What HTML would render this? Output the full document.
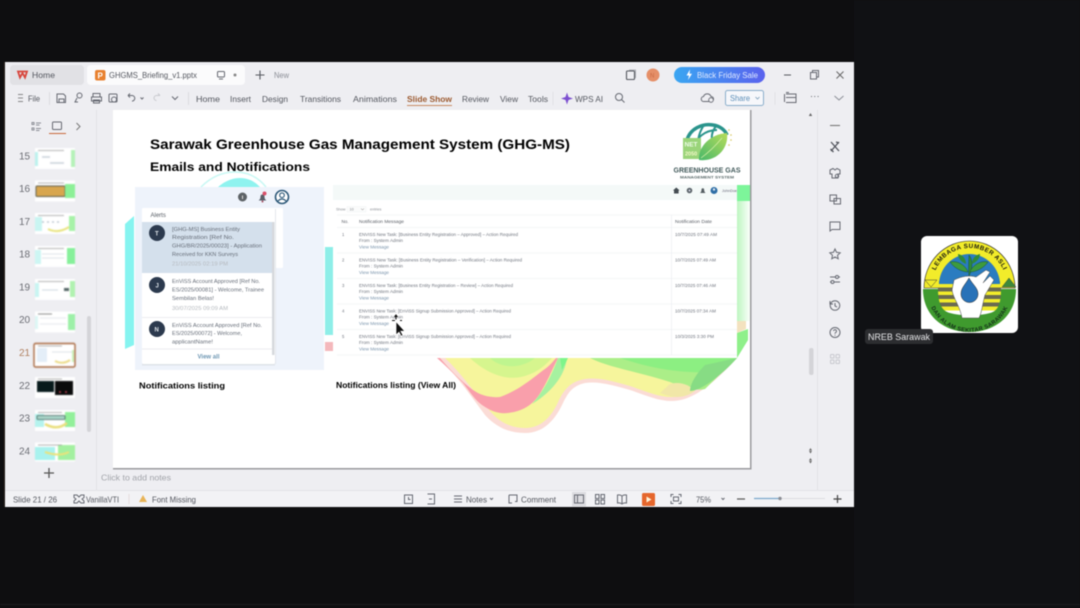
<!DOCTYPE html>
<html lang="en"><head><meta charset="utf-8"><title>GHGMS Briefing</title>
<style>
html,body{margin:0;padding:0;width:1080px;height:608px;overflow:hidden;background:#0e0e10}
svg{display:block;filter:blur(.5px)}
text{font-family:"Liberation Sans",sans-serif}
.ui{font-size:8.500px;fill:#54575f}
.ic{fill:none;stroke:#666972;stroke-width:1}
.n{font-size:10px;fill:#6b6d74}
.t{font-size:4.200px;fill:#70757f}
.l{font-size:4.200px;fill:#7a94ac}
.c{font-size:5.600px;fill:#676e79}
.d{font-size:5.200px;fill:#b6babf}
.b{font-weight:bold;fill:#000}
</style></head><body>
<svg width="1080" height="608" viewBox="0 0 1080 608" xmlns="http://www.w3.org/2000/svg">
<defs>
<linearGradient id="bf" x1="0" x2="1" y1="0" y2="0"><stop offset="0" stop-color="#3aa6f2"/><stop offset="1" stop-color="#5a62ee"/></linearGradient>
<linearGradient id="gh" x1="0" x2="1" y1="0" y2="0"><stop offset="0" stop-color="#bdf6c0"/><stop offset="1" stop-color="#fbfffb"/></linearGradient>
<linearGradient id="lf" x1="0" x2="1" y1="1" y2="0"><stop offset="0" stop-color="#49b86a"/><stop offset="1" stop-color="#b6dc5a"/></linearGradient>
<path id="arcT" d="M932.500 285A37 37 0 0 1 1006.500 285"/>
<path id="arcB" d="M927.500 290A42 42 0 0 0 1011.500 290"/>
</defs>
<rect width="1080" height="608" fill="#0e0e10"/>
<rect x="854" y="0" width="226" height="608" fill="#101114"/>
<rect x="0" y="604" width="1080" height="1" fill="#1c1c1e"/>

<!-- window -->
<rect x="5" y="62" width="849" height="445" fill="#eeeef2"/>
<rect x="3.500" y="62" width="1.500" height="445" fill="#1d1815"/>

<!-- tabs -->
<rect x="10" y="65" width="74" height="20" rx="4" fill="#e1e1e5"/>
<rect x="87" y="65" width="158" height="20" rx="4" fill="#fbfbfc"/>
<path d="M18 71.500l2 6 2.500-4.500 2.500 4.500 2-6z" fill="none" stroke="#d8453c" stroke-width="1.800"/>
<text x="32" y="78" class="ui" textLength="23" lengthAdjust="spacingAndGlyphs">Home</text>
<rect x="95" y="70" width="10.500" height="10.500" rx="2" fill="#e8812f"/>
<text x="97.500" y="78.500" style="font-size:8px;font-weight:bold;fill:#fff">P</text>
<text x="109" y="78" class="ui" textLength="88" lengthAdjust="spacingAndGlyphs">GHGMS_Briefing_v1.pptx</text>
<rect x="217.500" y="71.500" width="7" height="5.500" rx="1" class="ic"/><path d="M219 79h4" class="ic"/>
<circle cx="235" cy="75" r="1.500" fill="#888"/>
<path d="M260 70.500v9M255.500 75h9" stroke="#55585f" stroke-width="1.100"/>
<text x="274" y="78" style="font-size:8px;fill:#8b8e96" textLength="15" lengthAdjust="spacingAndGlyphs">New</text>

<!-- top right -->
<rect x="626.500" y="71" width="8" height="8.500" rx="1" fill="none" stroke="#55585f" stroke-width="1.100"/><path d="M629 70h6.500v8" fill="none" stroke="#9a9da4" stroke-width=".8"/>
<circle cx="653" cy="75" r="6.500" fill="#e58f68"/>
<text x="650" y="77.500" style="font-size:6px;fill:#c96a44">N</text>
<rect x="674" y="67" width="91" height="16" rx="8" fill="url(#bf)"/>
<path d="M690 69.500l-3.500 6h2.500l-1 4.500 4-6.300h-2.500z" fill="#fff"/>
<text x="697" y="78" style="font-size:8px;fill:#dfe9ff" textLength="61" lengthAdjust="spacingAndGlyphs">Black Friday Sale</text>
<path d="M784 75h7" stroke="#55585f"/>
<rect x="810.500" y="72.500" width="6" height="6.500" class="ic"/><path d="M812.500 72.500v-2h6v6.500h-2" class="ic"/>
<path d="M836.500 71.500l7 7M843.500 71.500l-7 7" stroke="#666"/>

<!-- toolbar -->
<path d="M18 94.500h5M18 98h5M18 101.500h5" stroke="#888" stroke-width=".9"/>
<text x="28" y="101.500" class="ui" textLength="12" lengthAdjust="spacingAndGlyphs">File</text>
<path d="M49.500 92v13" stroke="#dcdce0"/>
<path d="M57 94h6.500l2 2v6.500h-8.500z" class="ic"/><path d="M59 102v-3h5v3" class="ic"/>
<circle cx="79.500" cy="95.500" r="2.500" class="ic"/><path d="M77 98l-2 4h3" class="ic"/>
<path d="M93 97v-3.500h7V97M91.500 97h10v4h-10zM93.500 100h6v3h-6z" class="ic"/>
<rect x="109" y="94" width="8" height="8" rx="1" class="ic"/><circle cx="114" cy="99.500" r="2.500" class="ic"/>
<path d="M128 95.500h4a2.800 2.800 0 0 1 0 5.600M128 95.500l2-2M128 95.500l2 2" class="ic"/>
<path d="M140.500 97.500l1.500 1.500 1.500-1.500" class="ic"/>
<path d="M160 95.500h-3.500a2.500 2.500 0 0 0 0 5M160 95.500l-2-2" fill="none" stroke="#c8c9ce"/>
<path d="M172 96.500l3 3 3-3" class="ic"/>
<path d="M188.500 92v13" stroke="#dcdce0"/>
<g class="ui">
<text x="196" y="102" textLength="24" lengthAdjust="spacingAndGlyphs">Home</text>
<text x="230" y="102" textLength="21" lengthAdjust="spacingAndGlyphs">Insert</text>
<text x="262" y="102" textLength="26" lengthAdjust="spacingAndGlyphs">Design</text>
<text x="300" y="102" textLength="41" lengthAdjust="spacingAndGlyphs">Transitions</text>
<text x="353" y="102" textLength="44" lengthAdjust="spacingAndGlyphs">Animations</text>
<text x="407" y="102" textLength="45" lengthAdjust="spacingAndGlyphs" style="font-weight:bold;fill:#9c5a30">Slide Show</text>
<text x="462" y="102" textLength="27" lengthAdjust="spacingAndGlyphs">Review</text>
<text x="500" y="102" textLength="18" lengthAdjust="spacingAndGlyphs">View</text>
<text x="528" y="102" textLength="20" lengthAdjust="spacingAndGlyphs">Tools</text>
<text x="575" y="102" textLength="28" lengthAdjust="spacingAndGlyphs">WPS AI</text>
</g>
<rect x="407" y="105" width="45" height="1" fill="#c98a64"/>
<path d="M553 92v13" stroke="#e0e0e4"/>
<path d="M567 92.500l1.500 4.500 4.500 1.500-4.500 1.500-1.500 4.500-1.500-4.500-4.500-1.500 4.500-1.500z" fill="#7c4fd0"/>
<circle cx="619" cy="97" r="3.500" class="ic"/><path d="M621.500 99.500l3 3" class="ic"/>
<path d="M704 101.500h7a2.500 2.500 0 0 0 0-5 4 4 0 0 0-7.500 0 2.500 2.500 0 0 0 .5 5z" class="ic"/>
<circle cx="711" cy="100" r="2.300" fill="#eeeef2" stroke="#5a5d66" stroke-width=".8"/>
<rect x="725.500" y="90.500" width="38" height="15" rx="2" fill="#f6f7fb" stroke="#8aaecb"/>
<text x="730" y="101" style="font-size:8px;fill:#5d8fb8" textLength="20" lengthAdjust="spacingAndGlyphs">Share</text>
<path d="M755.500 97l2 2 2-2" fill="none" stroke="#7a9cb8" stroke-width=".8"/>
<path d="M775 92v13" stroke="#e2e2e6"/>
<path d="M786 94h10v8.500h-10M786 92.500h3M786 97.500h10M784.500 94v8" class="ic"/>
<text x="810" y="99" style="font-size:9px;fill:#55585f;letter-spacing:.3px">···</text>
<path d="M834.500 96l4.500 4 4.500-4" fill="none" stroke="#8a8d95"/>

<!-- left pane -->
<path d="M96.500 110v381M817.500 110v381" stroke="#e2e2e6"/>
<path d="M32 122.500h2v2h-2zM32 128h2v2h-2zM36 123h5M36 125h3.500M36 128.500h5M36 130.500h3.500" fill="none" stroke="#8a8d95"/>
<rect x="52.500" y="122" width="9" height="7.500" rx="1" class="ic"/>
<rect x="49" y="133" width="17" height="1" fill="#c9683a"/>
<path d="M76.500 123l3.500 3.500-3.500 3.500" fill="none" stroke="#777"/>
<rect x="87" y="316" width="4" height="116" rx="2" fill="#d4d4d8"/>
<path d="M49 468v10M44 473h10" stroke="#555" stroke-width="1.300"/>

<!-- thumbnails -->
<g class="n">
<text x="19" y="159.500">15</text><text x="19" y="192">16</text><text x="19" y="225">17</text><text x="19" y="257.500">18</text><text x="19" y="290.500">19</text><text x="19" y="323">20</text><text x="19" y="356" style="fill:#b08060">21</text><text x="19" y="389">22</text><text x="19" y="421.500">23</text><text x="19" y="454.500">24</text>
</g>
<g id="thumbs" style="filter:blur(.6px)">
<g><rect x="35" y="148" width="40" height="21" fill="#fff"/><rect x="35" y="152" width="3" height="14" fill="#bdf2ee"/><rect x="71" y="150" width="4" height="17" fill="#b5f2b8"/><path d="M38 150.500h26" stroke="#999" stroke-width=".8"/><path d="M42 157h8M50 163h14" stroke="#c9d0da" stroke-width="1.500"/></g>
<g><rect x="35" y="180.500" width="40" height="21" fill="#fff"/><rect x="36" y="186" width="29" height="10.500" rx="1" fill="#d8a64e" stroke="#5b5b4b"/><rect x="65" y="184" width="10" height="14" fill="#8cf097"/><path d="M38 183h26" stroke="#999" stroke-width=".8"/></g>
<g><rect x="35" y="213" width="40" height="21" fill="#fff"/><rect x="35" y="217" width="7" height="14" fill="#c9f5f2"/><rect x="69" y="216" width="6" height="15" fill="#a7f2a8"/><path d="M38 215.500h26" stroke="#999" stroke-width=".8"/><path d="M42 222h20" stroke="#b0bcc8" stroke-width="1.200" stroke-dasharray="2 3"/><path d="M48 229q10 5 21-2" stroke="#e9e47e" stroke-width="2" fill="none"/></g>
<g><rect x="35" y="246" width="40" height="21" fill="#fff"/><rect x="35" y="250" width="6" height="14" fill="#cdf6f3"/><rect x="67" y="248" width="8" height="16" fill="#86f09a"/><path d="M38 248.500h26" stroke="#999" stroke-width=".8"/><path d="M42 254h22M42 258h22" stroke="#dfe3e8"/></g>
<g><rect x="35" y="279" width="40" height="21" fill="#fff"/><rect x="35" y="283" width="4" height="14" fill="#c9f5f2"/><rect x="70" y="281" width="5" height="16" fill="#b0f2b0"/><rect x="64" y="288" width="5" height="3" fill="#566"/><path d="M38 281.500h26" stroke="#999" stroke-width=".8"/><path d="M42 290h16" stroke="#cfd8e0"/></g>
<g><rect x="35" y="311.500" width="40" height="21" fill="#fff"/><rect x="35" y="316" width="3" height="13" fill="#dcf7f5"/><rect x="68" y="314" width="7" height="16" fill="#9df0a8"/><path d="M38 314h14" stroke="#888"/><path d="M40 318h26M40 324h26" stroke="#e6e9ec"/></g>
<g><rect x="34" y="343.500" width="41" height="23.500" rx="1.500" fill="#fff" stroke="#a8683f" stroke-width="1.400"/><rect x="37" y="348" width="10" height="14" fill="#e4eef8"/><rect x="72" y="350" width="2" height="12" fill="#c8f2b8"/><path d="M38 346h24" stroke="#999" stroke-width=".8"/><path d="M52 352h20" stroke="#dde2e8"/><path d="M55 361q8 4 15-1" stroke="#ecdc8a" stroke-width="2" fill="none"/></g>
<g><rect x="35" y="377" width="40" height="21" fill="#fff"/><rect x="37" y="381" width="17" height="11" fill="#071a1c"/><rect x="55" y="381" width="18" height="14" fill="#0a0b0c"/><circle cx="60" cy="392" r="1" fill="#c04050"/><circle cx="66" cy="392" r="1" fill="#c04050"/><path d="M38 379h24" stroke="#999" stroke-width=".8"/></g>
<g><rect x="35" y="410" width="40" height="21" fill="#fff"/><rect x="35" y="414" width="9" height="13" fill="#b5f3ee"/><rect x="65" y="412" width="10" height="15" fill="#92f09a"/><rect x="37" y="415.500" width="28" height="4" rx="1" fill="#a8d4c8" stroke="#44635c" stroke-width=".8"/><path d="M45 424q12 7 22-1" stroke="#eadf7e" stroke-width="2.500" fill="none"/><path d="M38 412.500h24" stroke="#999" stroke-width=".8"/></g>
<g><rect x="35" y="442.500" width="40" height="19" fill="#fff"/><rect x="35" y="447" width="20" height="13" fill="#a9f2ee"/><rect x="58" y="445" width="17" height="15" fill="#a3f0a0"/><path d="M45 452q14 5 24 0" stroke="#ece27a" stroke-width="2" fill="none"/><path d="M38 445h24" stroke="#999" stroke-width=".8"/></g>
</g>

<!-- slide -->
<rect x="113" y="110" width="638.500" height="359.500" fill="#9b9b9e"/>
<rect x="113" y="110" width="637" height="358" fill="#fff"/>

<!-- decorative shapes -->
<path d="M125 224L134 216V345L125 349z" fill="#86f4f0"/>
<path d="M201 187C212 176 224 172 235 172C247 172 258 177 266 187" fill="none" stroke="#c8f8f4" stroke-width="1.500"/>
<path d="M218 187C226 180 234 178 240 178C248 178 254 181 260 187Z" fill="#8ff3ef"/>
<rect x="325" y="247" width="8" height="88" fill="#8eeee8"/>
<rect x="325" y="342" width="8" height="9" fill="#f4b8bc"/>
<rect x="737" y="185" width="13" height="16" fill="#7df59a"/>
<rect x="737" y="201" width="13" height="120" fill="url(#gh)"/>
<path d="M737 321h9v8l-9 4z" fill="#f3e2bf"/>
<path d="M737 333L748 329V340L737 358z" fill="#8ff08a"/>
<!-- wave -->
<path d="M437 358C455 372 470 395 485 415C497 428 510 433 525 433C545 433 556 418 563 403C568 393 572 386 585 383C600 381 615 386 630 390C645 395 658 401 672 401C690 401 710 388 737 358Z" fill="#fbdcd6"/>
<path d="M445 358C460 372 475 393 490 411C500 423 512 428 525 428C543 428 553 414 559 400C565 388 572 381 585 379C600 377 615 382 630 386C645 391 658 397 672 397C688 397 708 385 733 358Z" fill="#f6f59c"/>
<path d="M470 358C485 372 505 382 525 376C540 371 545 365 552 358Z" fill="#d6f58e"/>
<path d="M490 358C500 368 520 370 535 358Z" fill="#bff58f"/>
<path d="M437 358C445 365 455 375 463 383C470 392 475 400 482 405C492 412 500 414 508 413C525 411 535 403 542 390C548 380 553 368 558 358H556C552 363 549 366 545 369C535 376 520 390 500 397C490 398 480 395 473 390C462 382 450 370 440 358Z" fill="#f99fab"/>
<path d="M558 358H567C565 375 552 392 532 404C543 392 552 375 558 358Z" fill="#a6f1a0"/>
<path d="M560 358H568L562 370Z" fill="#7df58a"/>
<path d="M590 358C610 368 640 372 670 382C685 388 697 391 705 389L737 358Z" fill="#abee88"/>
<path d="M620 358C650 368 680 374 722 372L737 358Z" fill="#8cef82"/>
<path d="M660 393C675 399 685 398 695 391C690 385 680 381 670 384Z" fill="#f1e7a8"/>
<path d="M690 391C702 391 725 372 737 358L705 365C695 375 690 385 690 391Z" fill="#87dc84"/>

<!-- title -->
<text x="150" y="149" class="b" style="font-size:14px" textLength="420" lengthAdjust="spacingAndGlyphs">Sarawak Greenhouse Gas Management System (GHG-MS)</text>
<text x="150" y="171" class="b" style="font-size:12px" textLength="160" lengthAdjust="spacingAndGlyphs">Emails and Notifications</text>

<!-- GHG logo -->
<g fill="none" stroke="#2a948c">
<path d="M687 140C690 129 702 123 713 125C720 126 725 130 727 135" stroke-width="3.500"/>
<path d="M693 150C695 138 705 130 717 130M704 125C698 134 697 142 699 152M716 126C711 133 711 138 713 142" stroke-width="2"/>
</g>
<rect x="683" y="138" width="18" height="21" fill="#9ad47a"/>
<text x="684.500" y="146.500" style="font-size:6.500px;font-weight:bold;fill:#eefce8">NET</text>
<text x="685" y="155.500" style="font-size:5.500px;font-weight:bold;fill:#f3f8c8">2050</text>
<path d="M699 160C698 146 711 134 727 133C729 148 717 162 699 160Z" fill="url(#lf)"/>
<path d="M701 158Q712 150 722 138" stroke="#d8f0a8" stroke-width=".7" fill="none"/>
<circle cx="729" cy="130" r=".8" fill="#d6c65a"/><circle cx="731" cy="135" r=".8" fill="#d6c65a"/><circle cx="731" cy="140" r=".8" fill="#d6c65a"/><circle cx="729" cy="145" r=".8" fill="#d6c65a"/>
<text x="673.500" y="172.500" style="font-size:7px;font-weight:bold;fill:#41595a" textLength="67" lengthAdjust="spacingAndGlyphs">GREENHOUSE GAS</text>
<text x="680" y="178.500" style="font-size:3.800px;font-weight:bold;fill:#5a6a6a" textLength="54" lengthAdjust="spacingAndGlyphs">MANAGEMENT SYSTEM</text>

<!-- Alerts panel -->
<rect x="135" y="187" width="189" height="183" fill="#eef3fb"/>
<circle cx="242.500" cy="197" r="4.500" fill="#5d6266"/><rect x="242" y="195.500" width="1" height="3.500" fill="#ddd"/>
<path d="M258.500 200.500q2-1 2-4a2 2 0 0 1 4 0q0 3 2 4z" fill="#59606a"/><circle cx="264.500" cy="193.500" r="2" fill="#d9506a"/><circle cx="262.500" cy="201.500" r="1" fill="#a64e62"/>
<circle cx="282" cy="197" r="6.500" fill="#fff" stroke="#2c5878" stroke-width="1.600"/><circle cx="282" cy="195.200" r="2.300" fill="none" stroke="#2c5878" stroke-width="1.100"/><path d="M277.500 201.500q4.500-5 9 0" fill="none" stroke="#2c5878" stroke-width="1.200"/>
<rect x="142" y="208" width="141" height="60" rx="1" fill="#fff"/>
<rect x="142" y="208" width="133" height="156" rx="2" fill="#fff"/>
<rect x="275" y="209" width="1" height="155" fill="#e3e7ec"/>
<rect x="142" y="364" width="133" height="1.500" fill="#dfe3e8"/>
<text x="150.500" y="217" style="font-size:6px;fill:#555b63">Alerts</text>
<rect x="142" y="222" width="130" height="51" fill="#d4e0ec"/>
<rect x="272" y="222" width="2.500" height="133" fill="#d6d9dd"/>
<circle cx="157" cy="233" r="8" fill="#2c3a4e"/><text x="155" y="235.500" style="font-size:6px;font-weight:bold;fill:#dfe5ea">T</text>
<text x="172" y="231" class="c" textLength="68" lengthAdjust="spacingAndGlyphs">[GHG-MS] Business Entity</text>
<text x="172" y="239" class="c" textLength="62" lengthAdjust="spacingAndGlyphs">Registration [Ref No.</text>
<text x="172" y="247.500" class="c" textLength="90" lengthAdjust="spacingAndGlyphs">GHG/BR/2025/00023] - Application</text>
<text x="172" y="256" class="c" textLength="66" lengthAdjust="spacingAndGlyphs">Received for KKN Surveys</text>
<text x="172" y="265.500" class="d" textLength="56" lengthAdjust="spacingAndGlyphs">21/10/2025 02:19 PM</text>
<circle cx="157" cy="285" r="8" fill="#2c3a4e"/><text x="155.500" y="287.500" style="font-size:6px;font-weight:bold;fill:#dfe5ea">J</text>
<text x="172" y="283" class="c" textLength="88" lengthAdjust="spacingAndGlyphs">EnViSS Account Approved [Ref No.</text>
<text x="172" y="291.500" class="c" textLength="92" lengthAdjust="spacingAndGlyphs">ES/2025/00081] - Welcome, Trainee</text>
<text x="172" y="300" class="c" textLength="42" lengthAdjust="spacingAndGlyphs">Sembilan Belas!</text>
<text x="172" y="310" class="d" textLength="56" lengthAdjust="spacingAndGlyphs">30/07/2025 09:09 AM</text>
<path d="M142 317.500h130M142 349h130" stroke="#e6e8eb" stroke-width=".8"/>
<circle cx="157" cy="329" r="8" fill="#2c3a4e"/><text x="154.500" y="331.500" style="font-size:6px;font-weight:bold;fill:#dfe5ea">N</text>
<text x="172" y="327" class="c" textLength="90" lengthAdjust="spacingAndGlyphs">EnViSS Account Approved [Ref No.</text>
<text x="172" y="335" class="c" textLength="70" lengthAdjust="spacingAndGlyphs">ES/2025/00072] - Welcome,</text>
<text x="172" y="343.500" class="c" textLength="41" lengthAdjust="spacingAndGlyphs">applicantName!</text>
<text x="197.500" y="358.500" style="font-size:6.500px;font-weight:bold;fill:#6e97b3" textLength="22" lengthAdjust="spacingAndGlyphs">View all</text>
<text x="139" y="388.500" class="b" style="font-size:8px" textLength="86" lengthAdjust="spacingAndGlyphs">Notifications listing</text>

<!-- Notifications table -->
<rect x="333" y="185" width="404" height="173" fill="#fff"/>
<rect x="333" y="185" width="404" height="15" fill="#f4f9f8"/>
<path d="M673 190.500l3.300-3 3.300 3h-1v3h-4.600v-3z" fill="#444c52"/>
<circle cx="689.500" cy="190.500" r="2.800" fill="#5e666c"/><circle cx="689.500" cy="190.500" r=".9" fill="#eef"/>
<path d="M700 193q1.500-1 1.500-3.500a1.300 1.300 0 0 1 2.600 0q0 2.500 1.500 3.500z" fill="#555d62"/>
<circle cx="714" cy="190.500" r="3.500" fill="#2f6ea6"/><circle cx="714" cy="189.500" r="1.200" fill="#dfe9f2"/>
<text x="722" y="192" style="font-size:3.800px;fill:#667" textLength="15" lengthAdjust="spacingAndGlyphs">JohnDoe</text>
<text x="336" y="210.500" style="font-size:3.800px;fill:#888c92">Show</text>
<rect x="347" y="206.500" width="19" height="5.500" fill="#fafbfb" stroke="#eef0f2" stroke-width=".4"/>
<text x="349.500" y="210.500" style="font-size:3.800px;fill:#888c92">10</text>
<path d="M361 208.500l1.500 1.500 1.500-1.500" fill="none" stroke="#888" stroke-width=".5"/>
<text x="370" y="210.500" style="font-size:3.800px;fill:#888c92">entries</text>
<path d="M337 215h400M337 227.500h400M337 253h400M337 278.500h400M337 304h400M337 329.500h400M337 355h400" stroke="#f1f3f5" stroke-width=".7"/>
<path d="M671.500 215v140" stroke="#eceef1" stroke-width=".7"/>
<g style="font-weight:500">
<text x="341.500" y="223" style="font-size:4.500px;fill:#5c6168">No.</text>
<text x="359" y="223" style="font-size:4.500px;fill:#5c6168" textLength="45" lengthAdjust="spacingAndGlyphs">Notification Message</text>
<text x="675" y="223" style="font-size:4.500px;fill:#5c6168" textLength="37" lengthAdjust="spacingAndGlyphs">Notification Date</text>
</g>
<g>
<text x="342" y="236" class="t">1</text>
<text x="359" y="236" class="t" textLength="159" lengthAdjust="spacingAndGlyphs">ENVISS New Task: [Business Entity Registration – Approved] – Action Required</text>
<text x="359" y="242" class="t" textLength="44" lengthAdjust="spacingAndGlyphs">From : System Admin</text>
<text x="359" y="248.500" class="l" textLength="30" lengthAdjust="spacingAndGlyphs">View Message</text>
<text x="675" y="236" class="t" textLength="42" lengthAdjust="spacingAndGlyphs">10/7/2025 07:49 AM</text>

<text x="342" y="261.500" class="t">2</text>
<text x="359" y="261.500" class="t" textLength="163" lengthAdjust="spacingAndGlyphs">ENVISS New Task: [Business Entity Registration – Verification] – Action Required</text>
<text x="359" y="267.500" class="t" textLength="44" lengthAdjust="spacingAndGlyphs">From : System Admin</text>
<text x="359" y="274" class="l" textLength="30" lengthAdjust="spacingAndGlyphs">View Message</text>
<text x="675" y="261.500" class="t" textLength="41" lengthAdjust="spacingAndGlyphs">10/7/2025 07:49 AM</text>

<text x="342" y="287" class="t">3</text>
<text x="359" y="287" class="t" textLength="154" lengthAdjust="spacingAndGlyphs">ENVISS New Task: [Business Entity Registration – Review] – Action Required</text>
<text x="359" y="293" class="t" textLength="44" lengthAdjust="spacingAndGlyphs">From : System Admin</text>
<text x="359" y="299.500" class="l" textLength="30" lengthAdjust="spacingAndGlyphs">View Message</text>
<text x="675" y="287" class="t" textLength="41" lengthAdjust="spacingAndGlyphs">10/7/2025 07:46 AM</text>

<text x="342" y="312.500" class="t">4</text>
<text x="359" y="312.500" class="t" textLength="152" lengthAdjust="spacingAndGlyphs">ENVISS New Task: [EnViSS Signup Submission Approved] – Action Required</text>
<text x="359" y="318.500" class="t" textLength="44" lengthAdjust="spacingAndGlyphs">From : System Admin</text>
<text x="359" y="325" class="l" textLength="30" lengthAdjust="spacingAndGlyphs">View Message</text>
<text x="675" y="312.500" class="t" textLength="41" lengthAdjust="spacingAndGlyphs">10/7/2025 07:34 AM</text>

<text x="342" y="338" class="t">5</text>
<text x="359" y="338" class="t" textLength="152" lengthAdjust="spacingAndGlyphs">ENVISS New Task: [EnViSS Signup Submission Approved] – Action Required</text>
<text x="359" y="344" class="t" textLength="44" lengthAdjust="spacingAndGlyphs">From : System Admin</text>
<text x="359" y="350.500" class="l" textLength="30" lengthAdjust="spacingAndGlyphs">View Message</text>
<text x="675" y="338" class="t" textLength="39" lengthAdjust="spacingAndGlyphs">10/3/2025 3:30 PM</text>
</g>
<text x="336" y="388" class="b" style="font-size:8px" textLength="120" lengthAdjust="spacingAndGlyphs">Notifications listing (View All)</text>

<!-- cursor -->
<path d="M396 321.500v13.500l3-2.800 2.200 4 1.800-1-2.200-4h4z" fill="#111" stroke="#fff" stroke-width=".7"/>
<path d="M396 315.500v4M394.500 317l1.500-2 1.500 2M392 320.500h3M400 320.500h2" stroke="#111" stroke-width="1"/>

<!-- notes and side -->
<text x="101" y="480.500" style="font-size:8.500px;fill:#a2a4aa" textLength="70" lengthAdjust="spacingAndGlyphs">Click to add notes</text>
<path d="M810.500 113l-1.700 3h3.400z" fill="#666"/>
<rect x="809" y="348" width="4.500" height="27" rx="2" fill="#d4d4d8"/>
<path d="M810.500 448l-1.500 2.500h3zM810.500 453.500l-1.500-2.500h3z M810.500 458l-1.500 2.500h3zM810.500 463.500l-1.500-2.500h3z" fill="#666"/>

<!-- right rail -->
<path d="M830 125.500h10" stroke="#777" stroke-width="1.100"/>
<path d="M831 142l8 9M839 142l-8 9M830.500 149l3 3M836 142l3 1" fill="none" stroke="#50535b" stroke-width="1.300"/>
<path d="M830 170l3-1.500 2 1.500 2-1.500 3 1.500v4h-2v4h-6v-4h-2z" class="ic"/><circle cx="837" cy="176" r="1.700" class="ic"/>
<rect x="830" y="195" width="6.500" height="6" class="ic"/><rect x="834" y="198.500" width="6.500" height="5.500" class="ic"/>
<path d="M830 222h10v7.500h-8l-2 1.500z" class="ic"/>
<path d="M835 249l1.500 3.300 3.700.5-2.700 2.500.7 3.500-3.200-1.800-3.200 1.800.7-3.500-2.700-2.500 3.700-.5z" class="ic"/>
<path d="M830 277h5.500M839 277h1M830 282h1M834.500 282h5.500" class="ic"/><circle cx="837" cy="277" r="1.500" class="ic"/><circle cx="832.500" cy="282" r="1.500" class="ic"/>
<circle cx="835" cy="305.500" r="4.800" class="ic"/><path d="M835 303v3l2 1M830 301v3h3" class="ic"/>
<circle cx="835" cy="332.500" r="5" class="ic"/><path d="M833.500 331a1.500 1.500 0 1 1 2.200 1.500q-.7.400-.7 1.200" class="ic"/><circle cx="835" cy="335.300" r=".5" fill="#5a5d66"/>
<g fill="none" stroke="#c8c9cf"><rect x="830.500" y="354.500" width="3.500" height="3.500" rx=".8"/><rect x="836" y="354.500" width="3.500" height="3.500" rx=".8"/><rect x="830.500" y="360" width="3.500" height="3.500" rx=".8"/><rect x="836" y="360" width="3.500" height="3.500" rx=".8"/></g>

<!-- status bar -->
<rect x="5" y="491" width="849" height="16" fill="#f2f2f5"/>
<path d="M5 490.500h849" stroke="#e4e4e8"/>
<text x="13" y="502.500" class="ui" textLength="44" lengthAdjust="spacingAndGlyphs">Slide 21 / 26</text>
<path d="M74 495h3l2 2 2-2h3v2.500l-2 1.500 2 2v2h-3l-2-2-2 2h-3v-2l2-2-2-1.500z" class="ic"/>
<text x="86" y="502.500" class="ui" textLength="33" lengthAdjust="spacingAndGlyphs">VanillaVTI</text>
<path d="M129 494v10" stroke="#e4dcdc"/>
<path d="M143 495l4 7h-8z" fill="#e8b458"/>
<text x="152" y="502.500" class="ui" textLength="44" lengthAdjust="spacingAndGlyphs">Font Missing</text>
<rect x="404.500" y="495" width="8" height="8.500" class="ic"/><path d="M408.500 497v2.500h2" class="ic"/>
<path d="M427.500 494h7v10h-7M429 499h3" class="ic"/>
<path d="M454 496h8M454 499h8M454 502h8" class="ic"/>
<text x="466" y="502.500" class="ui" textLength="21" lengthAdjust="spacingAndGlyphs">Notes</text>
<path d="M490 498l1.500 1.500 1.500-1.500" class="ic"/>
<path d="M509 495h8v6.500h-2M509 495v8h3" class="ic"/>
<text x="521" y="502.500" class="ui" textLength="35" lengthAdjust="spacingAndGlyphs">Comment</text>
<rect x="572" y="492" width="14" height="14.500" fill="#dcdce0"/>
<rect x="574.500" y="495" width="9" height="8" class="ic"/><path d="M577.500 495v8" class="ic"/>
<rect x="595.500" y="494.500" width="3.500" height="4" class="ic"/><rect x="601" y="494.500" width="3.500" height="4" class="ic"/><rect x="595.500" y="500" width="3.500" height="4" class="ic"/><rect x="601" y="500" width="3.500" height="4" class="ic"/>
<path d="M622 496q-2-1.500-4.500-1v8q2.500-.5 4.500 1 2-1.500 4.500-1v-8q-2.500-.5-4.500 1zv8" class="ic"/>
<rect x="642" y="493" width="13" height="13" rx="1.500" fill="#e5662c"/><path d="M646.500 496.500l5 3-5 3z" fill="#fff3d8"/>
<path d="M671 497v-2.500h2.500M678.500 494.500h2.500v2.500M681 501v2.500h-2.500M673.500 503.500h-2.500v-2.500" class="ic"/><rect x="673.500" y="497" width="5" height="4" class="ic"/>
<text x="696" y="502.500" class="ui" textLength="15" lengthAdjust="spacingAndGlyphs">75%</text>
<path d="M721.500 498l1.500 1.500 1.500-1.500" class="ic"/>
<path d="M737 499h8" stroke="#555" stroke-width="1.200"/>
<path d="M754 498.500h71" stroke="#dcdce0"/>
<path d="M754 498.500h26" stroke="#7aa8cc" stroke-width="1.200"/>
<circle cx="780" cy="498.500" r="1.700" fill="#8a8d94"/>
<path d="M837.500 495v8M833.500 499h8" stroke="#444" stroke-width="1.200"/>

<!-- participant tile -->
<rect x="921" y="236" width="97" height="97" rx="6" fill="#fff"/>
<path d="M924 288A45.500 47 0 0 1 1015 288H1000A30.500 33 0 0 0 939 288Z" fill="#f2ec2a" stroke="#222" stroke-width=".6"/>
<path d="M939 285A30.500 31 0 0 1 1000 285Z" fill="#2a7cc0"/>
<g><rect x="938" y="284" width="63" height="3.500" fill="#f2ec2a"/><rect x="938" y="287.500" width="63" height="4" fill="#6a6a50"/><rect x="938" y="291.500" width="63" height="3.500" fill="#f2ec2a"/><rect x="938" y="295" width="63" height="4" fill="#6a6a50"/><rect x="938" y="299" width="63" height="3.500" fill="#f2ec2a"/><rect x="938" y="302.500" width="63" height="4" fill="#6a6a50"/><rect x="938" y="306.500" width="63" height="4" fill="#f2ec2a"/></g>
<path d="M923 289H938C938 304 942 311 950 313C960 316 980 316 990 313C998 311 1001 304 1001 289H1016C1016 316 995 332 969.500 332C944 332 923 316 923 289Z" fill="#3f9a2e"/>
<path d="M925 280h12l-6 7z" fill="#f2ec2a" stroke="#333" stroke-width=".5"/>
<path d="M1002 287l7-9 7 9z" fill="#3d8a3a" stroke="#333" stroke-width=".4"/>
<path d="M954 280C962 276 970 275 976 277L986 270L990 272L983 283L990 276L994 280L985 295C982 306 982 312 979 318H962C960 306 953 298 952 290Z" fill="#fff" stroke="#444" stroke-width=".5"/>
<path d="M969 278C965 285 961 288 961 294A8.500 8.500 0 0 0 978 294C978 288 973 285 969 278Z" fill="#2872b8" stroke="#222" stroke-width=".5"/>
<path d="M969 276C968 268 969 260 969 255C973 260 973 268 969 276Z" fill="#2f8a38" stroke="#143" stroke-width=".4"/>
<path d="M968 272C962 272 954 268 950 262C958 260 966 266 968 272ZM970 272C976 272 984 268 988 262C980 260 972 266 970 272Z" fill="#3d9a3d" stroke="#143" stroke-width=".4"/>
<path d="M966 264C961 262 958 258 958 254C963 255 966 259 966 264ZM972 264C977 262 980 258 980 254C975 255 972 259 972 264Z" fill="#2f8a38"/>
<text style="font-size:6.300px;font-weight:bold;fill:#1b1b10;letter-spacing:.5px"><textPath href="#arcT" startOffset="50%" text-anchor="middle">LEMBAGA SUMBER ASLI</textPath></text>
<text style="font-size:5.800px;font-weight:bold;fill:#14301a;letter-spacing:.3px"><textPath href="#arcB" startOffset="50%" text-anchor="middle">DAN ALAM SEKITAR SARAWAK</textPath></text>
<rect x="865" y="329" width="68" height="15" rx="3" fill="#2c2d30"/>
<text x="868" y="340" style="font-size:9.500px;fill:#e6e6e8" textLength="62" lengthAdjust="spacingAndGlyphs">NREB Sarawak</text>
</svg>
</body></html>
